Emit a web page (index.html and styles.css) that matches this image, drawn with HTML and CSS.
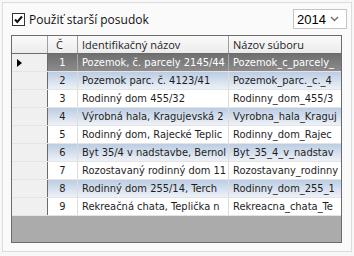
FILE: index.html
```html
<!DOCTYPE html>
<html>
<head>
	<meta charset="utf-8">
	<link rel="stylesheet" href="styles.css">
</head>
<body>
<div class="panel">
	<div class="topbar">
		<label class="check">
			<span class="box">
				<svg width="11" height="11" viewBox="0 0 11 11"><path d="M2 5.5 L4.3 8 L9 2.5" fill="none" stroke="#111" stroke-width="2"/></svg>
			</span>
			Použiť starší posudok
		</label>
		<div class="combo">
			<span>2014</span>
			<svg width="9" height="6" viewBox="0 0 9 6"><path d="M1 1 L4.5 4.5 L8 1" fill="none" stroke="#6d6d6d" stroke-width="1.4"/></svg>
		</div>
	</div>

	<div class="grid">
		<div class="row head">
			<div class="rh"></div>
			<div class="c num">Č</div>
			<div class="c name">Identifikačný názov</div>
			<div class="c file">Názov súboru</div>
		</div>
		<div class="row sel">
			<div class="rh"><span class="arrow"></span></div>
			<div class="c num">1</div>
			<div class="c name">Pozemok, č. parcely 2145/44</div>
			<div class="c file">Pozemok_c_parcely_</div>
		</div>
		<div class="row alt">
			<div class="rh"></div>
			<div class="c num">2</div>
			<div class="c name">Pozemok parc. č. 4123/41</div>
			<div class="c file">Pozemok_parc._c._4</div>
		</div>
		<div class="row">
			<div class="rh"></div>
			<div class="c num">3</div>
			<div class="c name">Rodinný dom 455/32</div>
			<div class="c file">Rodinny_dom_455/3</div>
		</div>
		<div class="row alt">
			<div class="rh"></div>
			<div class="c num">4</div>
			<div class="c name">Výrobná hala, Kragujevská 2</div>
			<div class="c file">Vyrobna_hala_Kraguj</div>
		</div>
		<div class="row">
			<div class="rh"></div>
			<div class="c num">5</div>
			<div class="c name">Rodinný dom, Rajecké Teplic</div>
			<div class="c file">Rodinny_dom_Rajec</div>
		</div>
		<div class="row alt">
			<div class="rh"></div>
			<div class="c num">6</div>
			<div class="c name">Byt 35/4 v nadstavbe, Bernol</div>
			<div class="c file">Byt_35_4_v_nadstav</div>
		</div>
		<div class="row">
			<div class="rh"></div>
			<div class="c num">7</div>
			<div class="c name">Rozostavaný rodinný dom 11</div>
			<div class="c file">Rozostavany_rodinny</div>
		</div>
		<div class="row alt">
			<div class="rh"></div>
			<div class="c num">8</div>
			<div class="c name">Rodinný dom 255/14, Terch</div>
			<div class="c file">Rodinny_dom_255_1</div>
		</div>
		<div class="row">
			<div class="rh"></div>
			<div class="c num">9</div>
			<div class="c name">Rekreačná chata, Teplička n</div>
			<div class="c file">Rekreacna_chata_Te</div>
		</div>
	</div>
</div>
</body>
</html>
```

FILE: styles.css
```css
body {
	margin: 0;
	width: 354px;
	height: 256px;
	background: #f7f7f7;
	font-family: "DejaVu Sans Condensed", "DejaVu Sans", sans-serif;
	font-stretch: condensed;
	font-size: 11px;
	color: #1e1e1e;
	overflow: hidden;
}

.panel {
	margin: 2px 0 0 2px;
	width: 336px;
	height: 234px;
	border: 1px solid #dcdcdc;
	padding: 6px 4px 8px 8px;
	background: #fafafa;
}

.topbar {
	display: flex;
	align-items: center;
	justify-content: space-between;
	height: 20px;
	margin-bottom: 6px;
}

.check {
	display: flex;
	align-items: center;
	gap: 4px;
	margin-left: 1px;
	font-family: "Open Sans", sans-serif;
	font-stretch: normal;
	font-size: 12px;
	color: #111;
}

.box {
	width: 11px;
	height: 11px;
	border: 1px solid #333;
	background: #fff;
	display: flex;
}

.combo {
	box-sizing: border-box;
	width: 54px;
	height: 20px;
	border: 1px solid #c4c4c4;
	background: #fff;
	display: flex;
	align-items: center;
	justify-content: space-between;
	padding: 0 7px 0 3px;
	font-family: "Liberation Sans", sans-serif;
	font-stretch: normal;
	font-size: 13px;
	color: #000;
}

.grid {
	width: 329px;
	height: 206px;
	border: 1px solid #6b6b6b;
	background: #ababab;
}

.row {
	display: flex;
	height: 17px;
	border-bottom: 1px solid #e4e4e4;
	background: #fff;
}

.row .c {
	line-height: 17px;
	white-space: nowrap;
	overflow: hidden;
	border-right: 1px solid #dcdcdc;
	box-sizing: border-box;
}

.rh {
	width: 36px;
	flex: none;
	box-sizing: border-box;
	background: #f0f0f0;
	border-right: 1px solid #6b6b6b;
	display: flex;
	align-items: center;
}

.num {
	width: 30px;
	flex: none;
	text-align: center;
}

.name {
	width: 151px;
	flex: none;
	padding-left: 4px;
}

.file {
	flex: 1;
	padding-left: 4px;
	border-right: none !important;
}

.head {
	height: 17px;
	border-bottom: 1px solid #6b6b6b;
	background: linear-gradient(#fafafa, #ececec);
}

.head .rh {
	background: transparent;
	border-right: 1px solid #a0a0a0;
}

.head .c {
	border-right: 1px solid #a0a0a0;
	font-family: "Open Sans", sans-serif;
	font-stretch: normal;
	font-size: 11px;
}

.head .num {
	text-align: left;
	padding-left: 8px;
}

.alt {
	background: linear-gradient(#bccce2, #edf2f8);
}

.sel {
	background: linear-gradient(#6f6f6f, #8c8c8c);
	color: #fff;
}

.sel .c {
	border-right-color: #a8a8a8;
}

.arrow {
	margin-left: 5px;
	width: 0;
	height: 0;
	border-top: 4px solid transparent;
	border-bottom: 4px solid transparent;
	border-left: 5px solid #000;
}
```
